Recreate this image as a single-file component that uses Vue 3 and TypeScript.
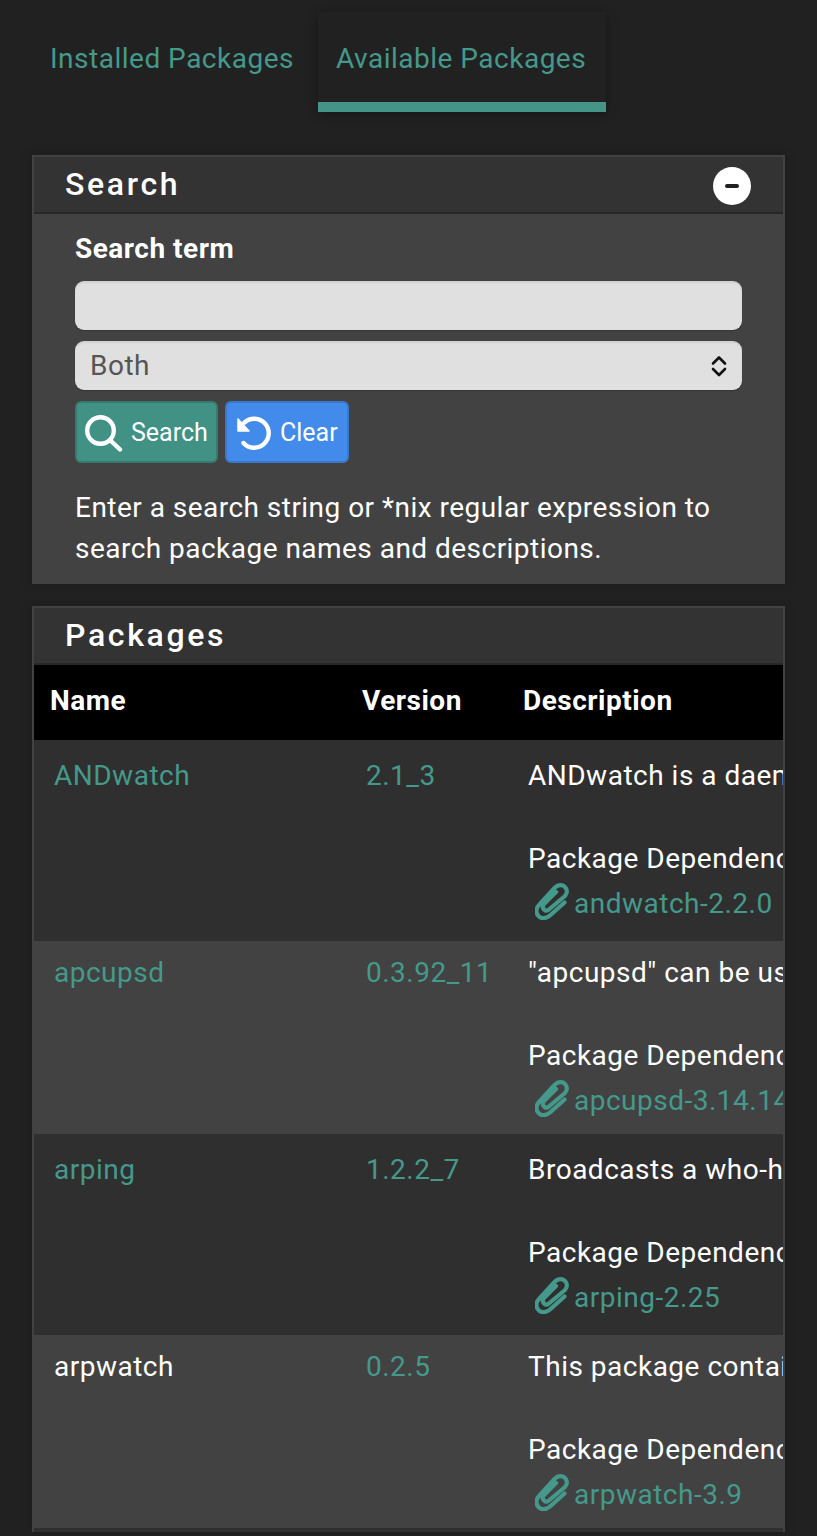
<script setup lang="ts">
interface Pkg { name: string; link: boolean; version: string; desc: string; dep: string }
const pkgs: Pkg[] = [
  { name: 'ANDwatch', link: true, version: '2.1_3', desc: 'ANDwatch is a daemon that monitors ARP', dep: 'andwatch-2.2.0' },
  { name: 'apcupsd', link: true, version: '0.3.92_11', desc: '"apcupsd" can be used for power management', dep: 'apcupsd-3.14.14_3' },
  { name: 'arping', link: true, version: '1.2.2_7', desc: 'Broadcasts a who-has ARP packet on the network', dep: 'arping-2.25' },
  { name: 'arpwatch', link: false, version: '0.2.5', desc: 'This package contains a daemon', dep: 'arpwatch-3.9' },
]
</script>

<template>
  <div class="page">
    <nav class="tabs">
      <a class="tab">Installed Packages</a>
      <a class="tab active">Available Packages</a>
    </nav>

    <section class="panel search">
      <header class="panel-head">
        <h2>Search</h2>
        <span class="collapse"><i></i></span>
      </header>
      <div class="search-body">
        <label class="term">Search term</label>
        <div class="input"></div>
        <div class="select">
          <span>Both</span>
          <svg width="18" height="24" viewBox="0 0 18 24" fill="none" stroke="#111" stroke-width="2.6" stroke-linecap="round" stroke-linejoin="round">
            <path d="M3 9.500 9 3.500l6 6" />
            <path d="M3 15l6 6 6-6" />
          </svg>
        </div>
        <div class="buttons">
          <button class="btn green">
            <svg width="40" height="40" viewBox="0 0 40 40" fill="none" stroke="#fff" stroke-width="4.4" stroke-linecap="round">
              <circle cx="15.500" cy="18.500" r="13.300" />
              <path d="M25.500 28.500l9.500 9" />
            </svg>
            <span>Search</span>
          </button>
          <button class="btn blue">
            <svg width="36" height="36" viewBox="0 0 36 36" fill="none" stroke="#fff" stroke-width="4.4" stroke-linecap="round">
              <path d="M8.500 8.500A14.500 14.500 0 1 1 7.500 29" />
              <path d="M2 5V17H13Z" fill="#fff" stroke-width="1.500" stroke-linejoin="round" />
            </svg>
            <span>Clear</span>
          </button>
        </div>
        <p class="help">Enter a search string or *nix regular expression to search package names and descriptions.</p>
      </div>
    </section>

    <section class="panel packages">
      <header class="panel-head">
        <h2>Packages</h2>
      </header>
      <table>
        <colgroup>
          <col class="c1" />
          <col class="c2" />
          <col class="c3" />
        </colgroup>
        <thead>
          <tr>
            <th>Name</th>
            <th>Version</th>
            <th>Description</th>
          </tr>
        </thead>
        <tbody>
          <tr v-for="p in pkgs" :key="p.name">
            <td :class="{ teal: p.link }">{{ p.name }}</td>
            <td class="teal">{{ p.version }}</td>
            <td>
              <div>{{ p.desc }}</div>
              <div class="dep-label">Package Dependencies:</div>
              <div class="dep">
                <svg width="34" height="38" viewBox="0 0 34 38" fill="none" stroke="#45998b" stroke-width="4.200" stroke-linecap="round" stroke-linejoin="round">
                  <path d="M29.500 20.500 15 33.500c-4 3.500-9 3.500-11.500.5-3-3.500-2.500-7.500.5-11L20 5.500c3-3 7.500-3 10-.5 2.500 2.500 2.500 6 0 9L14.500 27c-2 2-4 2-5.500.5s-1.500-3.500 0-5.500L21 10" />
                </svg>
                <span>{{ p.dep }}</span>
              </div>
            </td>
          </tr>
        </tbody>
      </table>
    </section>
  </div>
</template>

<style>
html, body { margin: 0; background: #212121; }
</style>

<style scoped>
.page {
  height: 1536px;
  overflow: hidden;
  background: #212121;
  font-family: Roboto, "Liberation Sans", sans-serif;
  color: #fff;
  box-sizing: border-box;
  padding: 12px 32px 0;
}
.tabs {
  display: flex;
  gap: 5px;
  height: 100px;
}
.tab {
  box-sizing: border-box;
  height: 100px;
  padding: 29px 19px 0 18px;
  font-size: 28px;
  letter-spacing: 0.5px;
  line-height: 36px;
  color: #45998b;
}
.active {
  padding-right: 20px;
  border-bottom: 10px solid #449488;
  box-shadow: 0 2px 10px rgba(0, 0, 0, 0.35);
}
.panel {
  box-sizing: border-box;
  width: 753px;
  border: 2px solid #424242;
  border-bottom: 0;
  overflow: hidden;
  box-shadow: 0 0 10px rgba(0, 0, 0, 0.2);
}
.search {
  margin-top: 43px;
  background: #424242;
}
.packages {
  margin-top: 22px;
}
.panel-head {
  box-sizing: border-box;
  height: 57px;
  background: #333;
  border-bottom: 2px solid #272727;
  display: flex;
  align-items: center;
  justify-content: space-between;
  padding: 0 32px 0 31px;
}
.panel-head h2 {
  margin: 0;
  font-size: 32px;
  font-weight: 500;
  letter-spacing: 2.65px;
  line-height: 55px;
}
.collapse {
  width: 38px;
  height: 38px;
  border-radius: 50%;
  background: #fff;
  display: flex;
  align-items: center;
  justify-content: center;
  margin-top: 2px;
}
.collapse i {
  width: 14px;
  height: 4px;
  background: #212121;
  border-radius: 2px;
}
.search-body {
  padding: 17px 41px 15px;
}
.term {
  display: block;
  font-size: 28px;
  letter-spacing: 0.5px;
  font-weight: 700;
  line-height: 36px;
}
.input, .select {
  box-sizing: border-box;
  height: 49px;
  background: #e0e0e0;
  border-radius: 9px;
  box-shadow: inset 0 2px 2px rgba(0, 0, 0, 0.07), 0 1px 1px rgba(0, 0, 0, 0.2);
}
.input { margin-top: 14px; }
.select {
  margin-top: 11px;
  display: flex;
  align-items: center;
  justify-content: space-between;
  padding: 0 14px 0 15px;
  color: #555;
  font-size: 28px;
  letter-spacing: 0.5px;
}
.select span { margin-top: -1px; }
.buttons {
  display: flex;
  gap: 7px;
  margin-top: 11px;
}
.btn {
  box-sizing: border-box;
  height: 62px;
  display: flex;
  align-items: center;
  color: #fff;
  font-family: inherit;
  font-size: 25px;
  border-radius: 6px;
  padding: 0;
}
.btn span { display: block; }
.green {
  width: 143px;
  background: #419184;
  border: 2px solid #37796f;
  padding-left: 8px;
  gap: 6px;
}
.blue {
  width: 124px;
  background: #428bea;
  border: 2px solid #3a78cc;
  padding-left: 9px;
  gap: 8px;
}
.help {
  margin: 24px 0 0;
  font-size: 28px;
  line-height: 41px;
  letter-spacing: 0.47px;
}
table {
  width: 751px;
  table-layout: fixed;
  border-collapse: separate;
  border-spacing: 0;
}
.c1 { width: 312px; }
.c2 { width: 162px; }
.c3 { width: 277px; }
th {
  box-sizing: border-box;
  height: 75px;
  background: #000;
  text-align: left;
  padding: 0 0 4px 16px;
  font-size: 28px;
  letter-spacing: 0.5px;
  font-weight: 700;
}
th:last-child { padding-left: 15px; }
tbody tr { background: #2f2f2f; }
tbody tr:nth-child(even) { background: #424242; }
td {
  box-sizing: border-box;
  height: 197px;
  vertical-align: top;
  padding: 11px 0 0 20px;
  font-size: 28px;
  letter-spacing: 0.5px;
  line-height: 41px;
  white-space: nowrap;
  overflow: hidden;
}
tbody tr:first-child td {
  height: 201px;
  padding-top: 15px;
}
tbody tr:nth-child(even) td {
  border-bottom: 4px solid #2f2f2f;
}
.teal { color: #45998b; }
.dep-label { margin-top: 42px; }
.dep {
  display: flex;
  align-items: center;
  height: 48px;
  padding-left: 7px;
  color: #45998b;
  gap: 5px;
}
.dep svg { flex: none; margin-top: -4px; }
</style>
